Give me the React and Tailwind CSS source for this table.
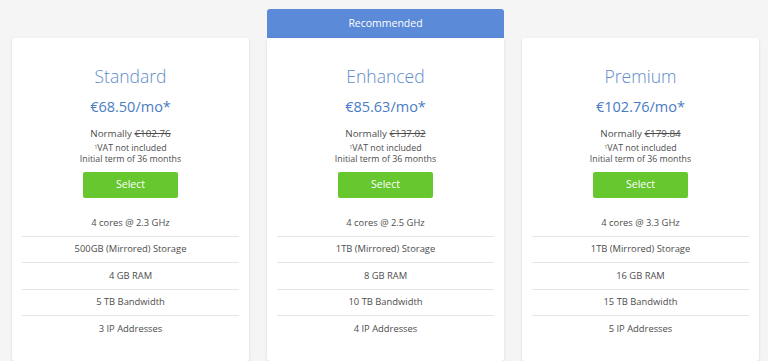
const plans = [
  {
    name: 'Standard',
    price: '€68.50/mo*',
    normal: '€102.76',
    features: ['4 cores @ 2.3 GHz', '500GB (Mirrored) Storage', '4 GB RAM', '5 TB Bandwidth', '3 IP Addresses'],
  },
  {
    name: 'Enhanced',
    price: '€85.63/mo*',
    normal: '€137.02',
    recommended: true,
    features: ['4 cores @ 2.5 GHz', '1TB (Mirrored) Storage', '8 GB RAM', '10 TB Bandwidth', '4 IP Addresses'],
  },
  {
    name: 'Premium',
    price: '€102.76/mo*',
    normal: '€179.84',
    features: ['4 cores @ 3.3 GHz', '1TB (Mirrored) Storage', '16 GB RAM', '15 TB Bandwidth', '5 IP Addresses'],
  },
];

function PlanCard({ plan }) {
  return (
    <div className="flex flex-col w-[237px]">
      {plan.recommended ? (
        <div className="h-[29px] bg-[#5b8ad8] rounded-t-[3px] flex items-center justify-center text-white text-[10.5px]">
          Recommended
        </div>
      ) : (
        <div className="h-[29px]" />
      )}
      <div
        className={
          'flex-1 bg-white shadow-[0_1px_3px_rgba(0,0,0,0.12)] px-[10px] pt-[24px] pb-[17px] flex flex-col items-center ' +
          (plan.recommended ? 'rounded-b-[3px]' : 'rounded-[3px]')
        }
      >
        <div className="text-[17.5px] leading-[28px] font-light text-[#5e8bc9]">{plan.name}</div>
        <div className="mt-[6px] text-[14.5px] leading-[22px] text-[#4a7cc3]">{plan.price}</div>
        <div className="mt-[9px] text-[9.8px] leading-[14px] text-[#4d4d4d]">
          Normally <span className="line-through">{plan.normal}</span>
        </div>
        <div className="mt-[2px] text-[8.8px] leading-[11px] text-[#4d4d4d]">
          <sup className="text-[5px]">1</sup>VAT not included
        </div>
        <div className="text-[8.8px] leading-[11px] text-[#4d4d4d]">Initial term of 36 months</div>
        <button className="mt-[7px] w-[95px] h-[26px] bg-[#66c72e] rounded-[2px] text-white text-[10.5px] font-medium">
          Select
        </button>
        <div className="mt-[12px] w-full flex flex-col">
          {plan.features.map((f, i) => (
            <div
              key={f}
              className={
                'h-[26.5px] flex items-center justify-center text-[9.4px] text-[#4d4d4d] ' +
                (i < plan.features.length - 1 ? 'border-b border-[#e6e6e6]' : '')
              }
            >
              {f}
            </div>
          ))}
        </div>
      </div>
    </div>
  );
}

export default function App() {
  return (
    <div
      className="w-[768px] h-[361px] bg-[#f5f5f5] pt-[9px] pl-[12px] flex gap-[18px]"
      style={{ fontFamily: '"Open Sans", sans-serif' }}
    >
      {plans.map(p => (
        <PlanCard key={p.name} plan={p} />
      ))}
    </div>
  );
}
